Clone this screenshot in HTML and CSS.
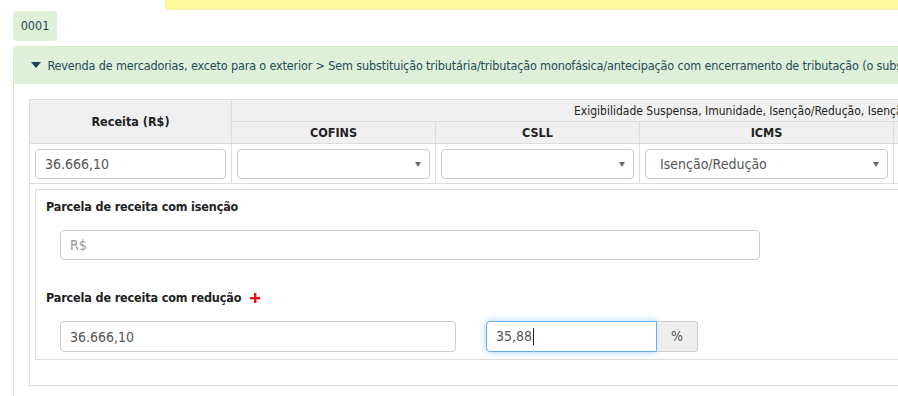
FILE: index.html
```html
<!DOCTYPE html>
<html lang="pt-BR">
<head>
    <meta charset="UTF-8">
    <title>Receita - Exigibilidade</title>
    <link rel="stylesheet" href="styles.css">
</head>
<body>

    <!-- Aviso no topo -->
    <div class="notice"></div>

    <!-- Aba do estabelecimento -->
    <div class="tab">0001</div>

    <!-- Painel da atividade -->
    <div class="panel">
        <div class="panel-heading">
            <span class="caret"></span>
            Revenda de mercadorias, exceto para o exterior &gt; Sem substituição tributária/tributação monofásica/antecipação com encerramento de tributação (o substituto tributário do ICMS deve utilizar essa opção)
        </div>
        <div class="panel-body">
            <table class="grid">
                <colgroup>
                    <col class="c-receita">
                    <col class="c-tax">
                    <col class="c-tax">
                    <col class="c-icms">
                    <col class="c-tax">
                    <col class="c-tax">
                </colgroup>
                <tr>
                    <th rowspan="2" class="bold">Receita (R$)</th>
                    <th colspan="5" class="group">Exigibilidade Suspensa, Imunidade, Isenção/Redução, Isenção/Redução Cesta Básica, Lançamento de ofício</th>
                </tr>
                <tr>
                    <th class="bold">COFINS</th>
                    <th class="bold">CSLL</th>
                    <th class="bold">ICMS</th>
                    <th class="bold">INSS/CPP</th>
                    <th class="bold">IRPJ</th>
                </tr>
                <tr class="inputs">
                    <td><input class="field" type="text" value="36.666,10"></td>
                    <td><span class="select"><select><option></option></select></span></td>
                    <td><span class="select"><select><option></option></select></span></td>
                    <td><span class="select"><select><option>Isenção/Redução</option></select></span></td>
                    <td><span class="select"><select><option></option></select></span></td>
                    <td><span class="select"><select><option></option></select></span></td>
                </tr>
                <tr>
                    <td colspan="6" class="detail-cell">
                        <div class="detail">
                            <div class="label">Parcela de receita com isenção</div>
                            <div class="row first">
                                <input class="field wide" type="text" placeholder="R$">
                            </div>

                            <div class="label">
                                Parcela de receita com redução
                                <svg class="plus" width="10" height="10" viewBox="0 0 10 10">
                                    <rect x="4" y="0" width="2.4" height="10" fill="#e4141b"/>
                                    <rect x="0" y="4" width="10" height="2.4" fill="#e4141b"/>
                                </svg>
                            </div>
                            <div class="row">
                                <input class="field half" type="text" value="36.666,10">
                                <div class="input-group">
                                    <div class="field focus">35,88<span class="cursor"></span></div>
                                    <span class="addon">%</span>
                                </div>
                            </div>
                        </div>
                    </td>
                </tr>
            </table>
        </div>
    </div>

</body>
</html>
```

FILE: styles.css
```css
body {
    margin: 0;
    padding: 0 13px;
    font-family: "DejaVu Sans", Verdana, sans-serif;
    font-stretch: condensed;
    font-size: 12px;
    color: #333;
    background: #fff;
    overflow: hidden;
}

/* Aviso amarelo */
.notice {
    margin-left: 152px;
    margin-right: -13px;
    height: 9px;
    background-color: #fefb9c;
    border-bottom: 1px solid #f4eeb0;
    border-left: 1px solid #f4eeb0;
    border-bottom-left-radius: 4px;
}

/* Aba */
.tab {
    display: inline-block;
    margin-top: 1px;
    width: 44px;
    height: 30px;
    line-height: 30px;
    text-align: center;
    background-color: #dff0d8;
    color: #234a5a;
    border-radius: 4px;
    font-size: 12.5px;
}

/* Painel */
.panel {
    width: 1400px;
    margin-top: 5px;
    border: 1px solid #d6e9c6;
    border-top-left-radius: 4px;
}

.panel-heading {
    height: 37px;
    line-height: 37px;
    padding-left: 17px;
    background-color: #dff0d8;
    color: #234a5a;
    white-space: nowrap;
    font-size: 12.5px;
    letter-spacing: -0.15px;
}

.caret {
    display: inline-block;
    width: 0;
    height: 0;
    margin-right: 3px;
    vertical-align: 2px;
    border-left: 5px solid transparent;
    border-right: 5px solid transparent;
    border-top: 6px solid #1d3f55;
}

.panel-body {
    padding: 15px;
}

/* Tabela */
.grid {
    border-collapse: collapse;
    table-layout: fixed;
    width: 1272px;
}

.c-receita { width: 202px; }
.c-tax { width: 204px; }
.c-icms { width: 254px; }

.grid th,
.grid td {
    border: 1px solid #ddd;
}

.grid th {
    background-color: #f0f0f0;
    height: 21px;
    padding: 0;
    font-weight: normal;
    color: #222;
    white-space: nowrap;
}

.grid th.bold {
    font-weight: bold;
    font-size: 12.5px;
}

.grid th.group {
    text-align: left;
    padding-left: 342px;
}

.grid td {
    padding: 5px;
}

.grid .inputs td {
    padding: 5px 5px 4px;
}

.grid .inputs .field,
.grid .inputs select {
    height: 30px;
}

.detail-cell {
    padding-bottom: 25px !important;
}

/* Campos */
.field {
    box-sizing: border-box;
    height: 31px;
    width: 100%;
    padding: 0 9px;
    border: 1px solid #ccc;
    border-radius: 4px;
    font-family: inherit;
    font-stretch: condensed;
    font-size: 14px;
    line-height: 29px;
    color: #555;
    background: #fff;
    outline: none;
}

.field::placeholder {
    color: #999;
}

.cursor {
    display: inline-block;
    width: 1px;
    height: 17px;
    margin-left: 1px;
    vertical-align: -4px;
    background-color: #222;
}

.select {
    position: relative;
    display: block;
}

.select select {
    box-sizing: border-box;
    width: 100%;
    height: 31px;
    padding: 0 14px;
    border: 1px solid #ccc;
    border-radius: 4px;
    background: #fff;
    font-family: inherit;
    font-stretch: condensed;
    font-size: 14px;
    color: #555;
    -webkit-appearance: none;
    appearance: none;
}

.select::after {
    content: "";
    position: absolute;
    right: 9px;
    top: 13px;
    border-left: 3px solid transparent;
    border-right: 3px solid transparent;
    border-top: 5px solid #666;
}

/* Detalhe de isenção/redução */
.detail {
    border: 1px solid #ddd;
    padding: 8px 10px 7px;
}

.label {
    font-weight: bold;
    font-size: 12.5px;
    letter-spacing: -0.15px;
    color: #222;
    line-height: 18px;
    margin-bottom: 14px;
}

.row + .label {
    margin-top: 1px;
}

.plus {
    margin-left: 5px;
    vertical-align: -1px;
}

.row {
    display: flex;
    gap: 30px;
    padding-left: 14px;
}

.row.first {
    margin-bottom: 29px;
}

.row .wide {
    width: 700px;
    height: 30px;
}

.row .half {
    width: 396px;
}

.input-group {
    display: flex;
}

.input-group .field {
    width: 171px;
    border-radius: 4px 0 0 4px;
}

.field.focus {
    border-color: #66afe9;
    box-shadow: 0 0 7px rgba(102, 175, 233, 0.6);
}

.addon {
    box-sizing: border-box;
    width: 41px;
    height: 31px;
    line-height: 29px;
    text-align: center;
    background-color: #eee;
    border: 1px solid #ccc;
    border-left: none;
    border-radius: 0 4px 4px 0;
    font-size: 14px;
    color: #555;
}
```
